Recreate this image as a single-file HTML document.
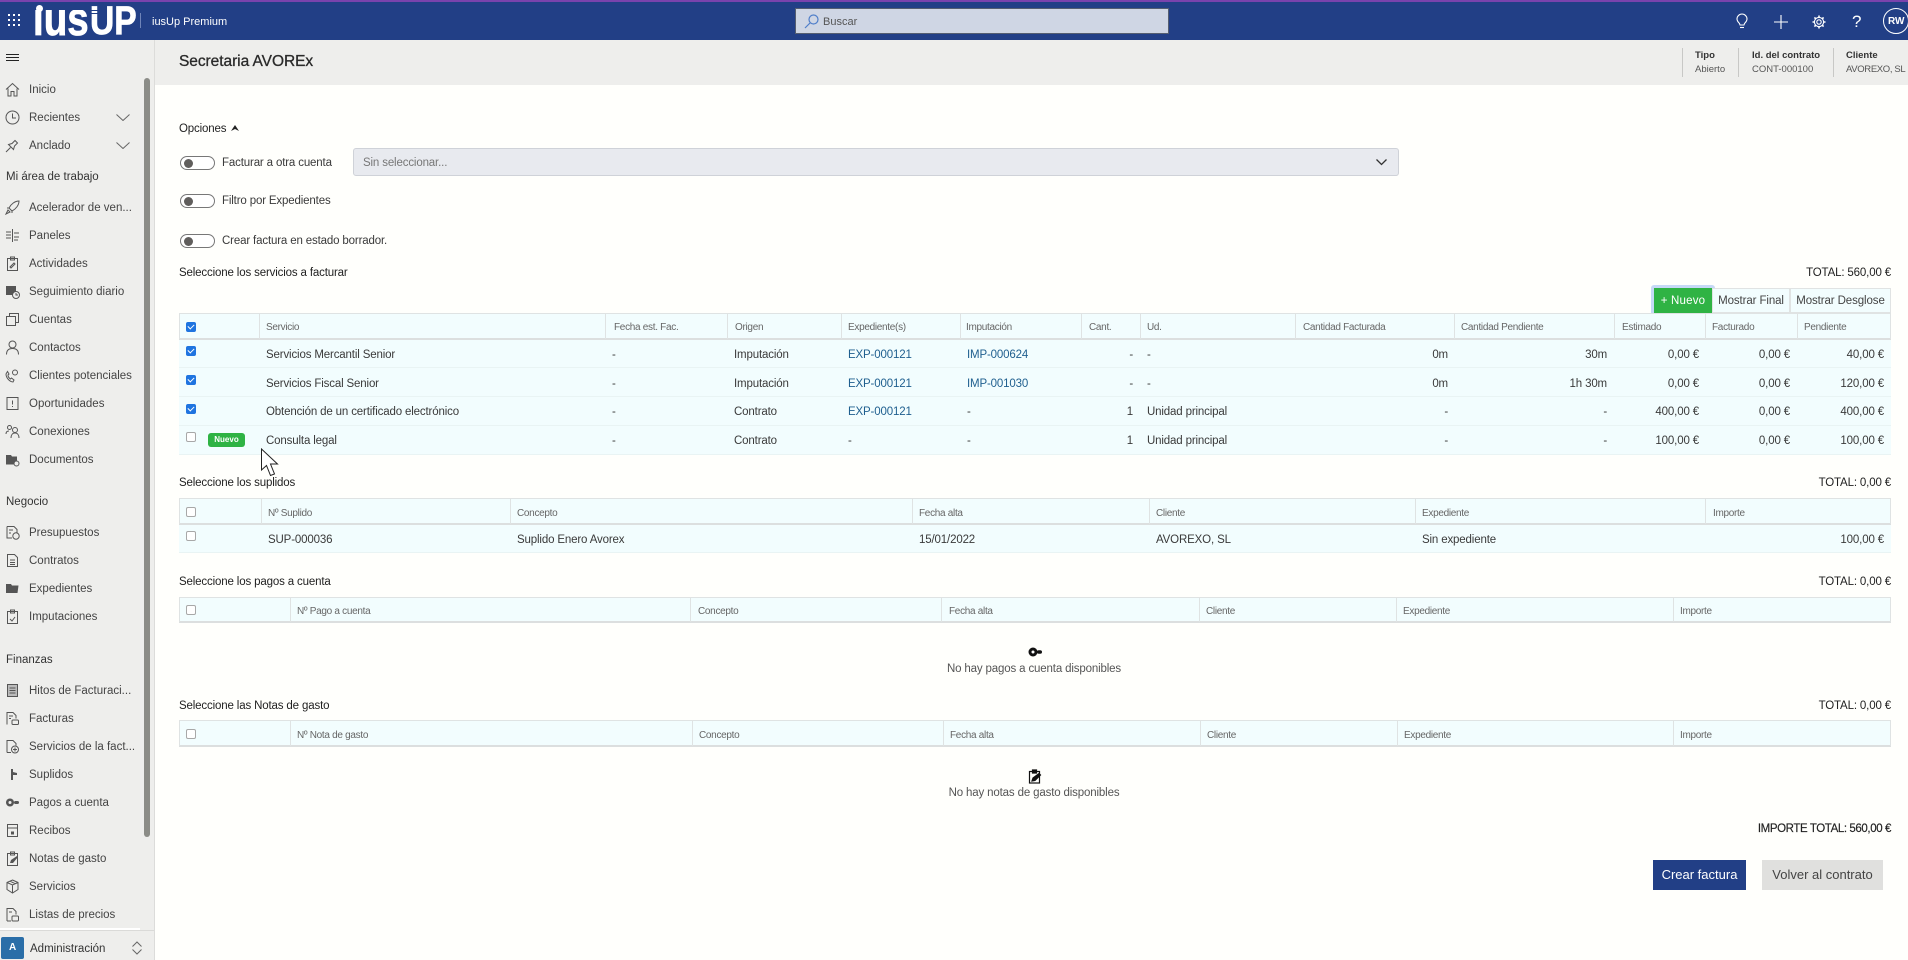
<!DOCTYPE html>
<html lang="es"><head><meta charset="utf-8"><title>Secretaria AVOREx</title>
<style>
html,body{margin:0;padding:0;width:1908px;height:960px;overflow:hidden;background:#fffffc}
body{position:relative;font-family:"Liberation Sans",Arial,sans-serif;font-size:12px;color:#333;-webkit-font-smoothing:antialiased}
.a{position:absolute}
.t{position:absolute;white-space:nowrap;line-height:14px;height:14px}
.n{font-size:11.5px;color:#444;left:29px;margin-top:1px}
.g{font-size:11.5px;color:#333;left:6px;margin-top:1px}
.h{font-size:10px;color:#666;letter-spacing:-.3px;margin-top:2px}
.c{font-size:11.5px;color:#3a3a3a;letter-spacing:-.15px;margin-top:1px}
.r{text-align:right}
.b{font-size:11.5px;color:#222;letter-spacing:-.15px;margin-top:1px}
.l{color:#1f5f8f}
.m{font-size:9.5px;margin-top:1px}
.hb{position:absolute;background:#f2fdfe;border-top:1px solid #dfe3e3;border-bottom:2px solid #dcdfdf;box-sizing:border-box}
.vl{position:absolute;width:1px;background:#dfe3e3}
.hl{position:absolute;height:1px;background:#e9f4f4}
.cb{position:absolute;width:10px;height:10px;border:1px solid #a8a8a8;border-radius:2px;background:#fff;box-sizing:border-box}
.ck{position:absolute;width:10px;height:10px;border-radius:2px;background:#1f74e0}
.ck:after{content:"";position:absolute;left:2px;top:1.5px;width:5px;height:3px;border-left:1.5px solid #fff;border-bottom:1.5px solid #fff;transform:rotate(-45deg)}
.tg{position:absolute;left:180px;width:33px;height:12px;border:1px solid #777;border-radius:8px;background:#fff;box-sizing:content-box}
.tg:after{content:"";position:absolute;left:3px;top:1.5px;width:9px;height:9px;border-radius:50%;background:#605e5c}
.ic{position:absolute;left:5px;width:15px;height:15px;fill:none;stroke:#555;stroke-width:1}
.s{fill:#555;stroke:none}
.btn{position:absolute;box-sizing:border-box;text-align:center;font-size:11.5px;letter-spacing:-.1px;line-height:24px;height:25px;top:288px;background:#f2fdfe;border:1px solid #e0e3e3;color:#444}
.lg{position:absolute;white-space:nowrap;font-weight:700;color:#fff;transform-origin:left top;-webkit-text-stroke:.8px #fff}
</style></head><body>

<!-- top bar -->
<div class="a" style="left:0;top:0;width:1908px;height:40px;background:#223f86"></div>
<div class="a" style="left:0;top:0;width:1908px;height:2px;background:#7a43ad"></div>
<svg class="a" style="left:8px;top:14px" width="12" height="12" fill="#fff"><rect x="0" y="0" width="2" height="2"/><rect x="5" y="0" width="2" height="2"/><rect x="10" y="0" width="2" height="2"/><rect x="0" y="5" width="2" height="2"/><rect x="5" y="5" width="2" height="2"/><rect x="10" y="5" width="2" height="2"/><rect x="0" y="10" width="2" height="2"/><rect x="5" y="10" width="2" height="2"/><rect x="10" y="10" width="2" height="2"/></svg>
<div class="lg" style="left:33px;top:-5px;height:47px;line-height:47px;font-size:47px;transform:scaleX(.82);clip-path:inset(15px -2px 0 -2px)">ius</div>
<div class="a" style="left:36px;top:5px;width:7px;height:7px;border-radius:50%;background:#fff"></div>
<div class="lg" style="left:90px;top:1px;height:40px;line-height:40px;font-size:40px;transform:scaleX(.84)">UP</div>
<div class="a" style="left:90px;top:10px;width:12px;height:1px;background:#223f86"></div>
<div class="a" style="left:90px;top:13px;width:12px;height:1px;background:#223f86"></div>
<div class="a" style="left:140px;top:13px;width:1px;height:15px;background:#6f84b8"></div>
<div class="t" style="left:152px;top:15px;font-size:11px;color:#fff">iusUp Premium</div>
<div class="a" style="left:795px;top:8px;width:374px;height:26px;box-sizing:border-box;background:#cfd6e4;border:1px solid #555e70"></div>
<svg class="a" style="left:804px;top:14px" width="15" height="15" fill="none" stroke="#4f7ec9" stroke-width="1.2"><circle cx="9.5" cy="5.5" r="4.5"/><path d="M6 9L1 14"/></svg>
<div class="t" style="left:823px;top:15px;font-size:11px;color:#555">Buscar</div>
<svg class="a" style="left:1735px;top:13px" width="14" height="16" fill="none" stroke="#fff" stroke-width="1.1"><path d="M4.500 10.500C3 9 2 7.800 2 6a5 5 0 0110 0c0 1.800-1 3-2.500 4.500L9 12H5z"/><path d="M5 14.500h4"/></svg>
<svg class="a" style="left:1774px;top:15px" width="14" height="14" stroke="#fff" stroke-width="1.1"><path d="M7 0v14M0 7h14"/></svg>
<svg class="a" style="left:1812px;top:15px" width="14" height="14" fill="none" stroke="#fff" stroke-width="1.1"><circle cx="7" cy="7" r="2.200"/><circle cx="7" cy="7" r="4.600"/><path stroke-width="1.600" d="M7 .5v2M7 11.500v2M.5 7h2M11.500 7h2M2.400 2.400l1.400 1.400M10.200 10.200l1.400 1.400M2.400 11.600l1.400-1.400M10.200 3.800l1.400-1.400"/></svg>
<div class="t" style="left:1852px;top:13px;height:18px;line-height:18px;font-size:17px;color:#fff">?</div>
<div class="a" style="left:1883px;top:8px;width:26px;height:26px;box-sizing:border-box;border:1px solid #fff;border-radius:50%"></div>
<div class="t" style="left:1888px;top:15px;font-size:10px;font-weight:700;color:#fff">RW</div>

<!-- sidebar -->
<div class="a" style="left:0;top:40px;width:154px;height:920px;background:#eeeeec;border-right:1px solid #dcdcda"></div>
<div class="a" style="left:144px;top:78px;width:6px;height:759px;border-radius:3px;background:#8b8c87"></div>
<svg class="a" style="left:6px;top:54px" width="13" height="7" stroke="#222"><path d="M0 .5h13M0 3.500h13M0 6.500h13"/></svg>

<svg class="ic" style="top:82px" viewBox="0 0 15 15"><path d="M1 7.500L7.500 1.500 14 7.500M3 6.500V14h3V9.500h3V14h3V6.500"/></svg>
<div class="t n" style="top:82px">Inicio</div>
<svg class="ic" style="top:110px" viewBox="0 0 15 15"><circle cx="7.500" cy="7.500" r="6.500"/><path d="M7.500 3.500v4.500H11"/></svg>
<div class="t n" style="top:110px">Recientes</div>
<svg class="a" style="left:116px;top:114px" width="14" height="7" fill="none" stroke="#666"><path d="M.5.500l6.500 6 6.500-6"/></svg>
<svg class="ic" style="top:138px" viewBox="0 0 15 15"><path d="M1 14l4.500-4.500M3.500 6.500l5 5 1-3.500 3-3-2.500-2.500-3 3z"/></svg>
<div class="t n" style="top:138px">Anclado</div>
<svg class="a" style="left:116px;top:142px" width="14" height="7" fill="none" stroke="#666"><path d="M.5.500l6.500 6 6.500-6"/></svg>
<div class="t g" style="top:169px">Mi área de trabajo</div>
<svg class="ic" style="top:200px" viewBox="0 0 15 15"><path d="M1 14l2-4 2 2zM4 8c2-4 6-7 10-7 0 4-3 8-7 10zM4 8L2 8M7 11v2"/></svg>
<div class="t n" style="top:200px">Acelerador de ven...</div>
<svg class="ic" style="top:228px" viewBox="0 0 15 15"><path d="M7.500 1v13M1 4h5M1 7h5M1 10h5M9 5h5M9 9h5M9 12h4"/></svg>
<div class="t n" style="top:228px">Paneles</div>
<svg class="ic" style="top:256px" viewBox="0 0 15 15"><rect x="2.500" y="2.500" width="10" height="12"/><path d="M5.500 1h4v3h-4zM5 11l4-4 1 1-4 4z"/></svg>
<div class="t n" style="top:256px">Actividades</div>
<svg class="ic" style="top:284px" viewBox="0 0 15 15"><rect class="s" x="1" y="2" width="10" height="9"/><circle cx="11" cy="11" r="3.500" fill="#eee"/><path d="M11 9v2h2"/></svg>
<div class="t n" style="top:284px">Seguimiento diario</div>
<svg class="ic" style="top:312px" viewBox="0 0 15 15"><rect x="1.500" y="4.500" width="9" height="9"/><path d="M4.500 4.500v-3h9v9h-3"/></svg>
<div class="t n" style="top:312px">Cuentas</div>
<svg class="ic" style="top:340px" viewBox="0 0 15 15"><circle cx="7.500" cy="4.500" r="3.500"/><path d="M1.500 14.500c0-4 2-6 6-6s6 2 6 6"/></svg>
<div class="t n" style="top:340px">Contactos</div>
<svg class="ic" style="top:368px" viewBox="0 0 15 15"><path d="M1 6c0 4 4 8 7 8l1-2-2.500-2-1 1C4 10 3 8.500 3 7l1-1-1.500-2.500z"/><circle cx="10" cy="4.500" r="2.500"/></svg>
<div class="t n" style="top:368px">Clientes potenciales</div>
<svg class="ic" style="top:396px" viewBox="0 0 15 15"><rect x="2" y="1.500" width="11" height="12"/><path d="M7.500 4.500v4M7.500 10v1"/></svg>
<div class="t n" style="top:396px">Oportunidades</div>
<svg class="ic" style="top:424px" viewBox="0 0 15 15"><circle cx="4.500" cy="3.500" r="2"/><circle cx="10" cy="6" r="2.500"/><path d="M1 10c0-2 1-3 3-3M6 14c0-3 1.500-5 4-5s4 2 4 5"/></svg>
<div class="t n" style="top:424px">Conexiones</div>
<svg class="ic" style="top:452px" viewBox="0 0 15 15"><path class="s" d="M1 3h5l1 1.500h5v4l-2 1-1 3H1z"/><circle cx="11.500" cy="11.500" r="2.500"/></svg>
<div class="t n" style="top:452px">Documentos</div>
<div class="t g" style="top:494px">Negocio</div>
<svg class="ic" style="top:525px" viewBox="0 0 15 15"><path d="M2 1.500h7l3 3V8M2 1.500V13h5"/><path d="M4 5h4M4 8h2"/><circle cx="11" cy="11" r="3.200"/></svg>
<div class="t n" style="top:525px">Presupuestos</div>
<svg class="ic" style="top:553px" viewBox="0 0 15 15"><path d="M2.500 1.500h7l3 3v9h-10zM5 7h5M5 9.500h5M5 11.500h5"/></svg>
<div class="t n" style="top:553px">Contratos</div>
<svg class="ic" style="top:581px" viewBox="0 0 15 15"><path class="s" d="M1 3h5l1 1.500h6.500L12.500 12H1z"/></svg>
<div class="t n" style="top:581px">Expedientes</div>
<svg class="ic" style="top:609px" viewBox="0 0 15 15"><rect x="2.500" y="2.500" width="10" height="12"/><path d="M5.500 1h4v3h-4zM5 10l2 2 3-4"/></svg>
<div class="t n" style="top:609px">Imputaciones</div>
<div class="t g" style="top:652px">Finanzas</div>
<svg class="ic" style="top:683px" viewBox="0 0 15 15"><rect x="2.500" y="1.500" width="10" height="12" fill="#bbb"/><path d="M4.500 5h6M4.500 7.500h6M4.500 10h6"/></svg>
<div class="t n" style="top:683px">Hitos de Facturaci...</div>
<svg class="ic" style="top:711px" viewBox="0 0 15 15"><path d="M2 13.500v-12h6l3 3v3M4 5h4M4 7.500h2"/><rect x="7" y="9" width="6.500" height="4.500" rx="1"/></svg>
<div class="t n" style="top:711px">Facturas</div>
<svg class="ic" style="top:739px" viewBox="0 0 15 15"><path d="M2 13.500v-12h6l3 3v2M2 13.500h4"/><circle cx="10" cy="10.500" r="3.500"/><path d="M10 8.500v4M8 10.500h4"/></svg>
<div class="t n" style="top:739px">Servicios de la fact...</div>
<svg class="ic" style="top:767px" viewBox="0 0 15 15"><path class="s" d="M6 2h2v3l4 1v2l-4 0v5H6z"/></svg>
<div class="t n" style="top:767px">Suplidos</div>
<svg class="ic" style="top:795px" viewBox="0 0 15 15"><circle class="s" cx="5" cy="7.500" r="4"/><circle cx="5" cy="7.500" r="1.500" fill="#eee" stroke="none"/><rect class="s" x="9" y="6" width="5" height="3" rx="1.500"/></svg>
<div class="t n" style="top:795px">Pagos a cuenta</div>
<svg class="ic" style="top:823px" viewBox="0 0 15 15"><path d="M2.500 1.500h10v12h-10zM2.500 5h10"/><rect class="s" x="6" y="8.500" width="3" height="3"/></svg>
<div class="t n" style="top:823px">Recibos</div>
<svg class="ic" style="top:851px" viewBox="0 0 15 15"><rect x="2.500" y="2.500" width="10" height="12"/><path d="M5.500 1h4v3h-4z"/><path class="s" d="M5 12l1-3 6-4 1 1-5 6z"/></svg>
<div class="t n" style="top:851px">Notas de gasto</div>
<svg class="ic" style="top:879px" viewBox="0 0 15 15"><path d="M7.500 1l5.500 2.500v7L7.500 14 2 10.500v-7zM2 3.500L7.500 6 13 3.500M7.500 6v8M5 2.200l5.500 2.600"/></svg>
<div class="t n" style="top:879px">Servicios</div>
<svg class="ic" style="top:907px" viewBox="0 0 15 15"><path d="M2 14V1.500h6l3 3v3M4 5h3M2 14h4"/><rect x="7" y="9" width="6.500" height="5" rx="1"/></svg>
<div class="t n" style="top:907px">Listas de precios</div>
<div class="a" style="left:0;top:928px;width:140px;height:2px;background:#fff"></div>
<div class="a" style="left:0;top:930px;width:154px;height:1px;background:#dadad8"></div>
<div class="a" style="left:1px;top:937px;width:23px;height:22px;background:#2a6ea8;border-radius:2px"></div>
<div class="t" style="left:9px;top:941px;font-size:10px;font-weight:700;color:#fff">A</div>
<div class="t n" style="top:941px;left:30px;color:#333;font-size:11.5px">Administración</div>
<svg class="a" style="left:132px;top:941px" width="10" height="14" fill="none" stroke="#666"><path d="M.5 5.500L5 1l4.500 4.500M.5 8.500L5 13l4.500-4.500"/></svg>

<!-- sub header -->
<div class="a" style="left:155px;top:40px;width:1753px;height:45px;background:#eeeeec"></div>
<div class="t" style="left:179px;top:53px;height:18px;line-height:18px;font-size:15.500px;color:#2a2a2a;-webkit-text-stroke:.3px #2a2a2a;letter-spacing:-.05px">Secretaria AVOREx</div>
<div class="a" style="left:1682px;top:48px;width:1px;height:29px;background:#c8c8c6"></div>
<div class="a" style="left:1738px;top:48px;width:1px;height:29px;background:#c8c8c6"></div>
<div class="a" style="left:1833px;top:48px;width:1px;height:29px;background:#c8c8c6"></div>
<div class="t m" style="left:1695px;top:48px;font-weight:700;color:#333">Tipo</div>
<div class="t m" style="left:1695px;top:62px;color:#555">Abierto</div>
<div class="t m" style="left:1752px;top:48px;font-weight:700;color:#333">Id. del contrato</div>
<div class="t m" style="left:1752px;top:62px;color:#555">CONT-000100</div>
<div class="t m" style="left:1846px;top:48px;font-weight:700;color:#333">Cliente</div>
<div class="t m" style="left:1846px;top:62px;color:#555;letter-spacing:-.35px">AVOREXO, SL</div>

<!-- options -->
<div class="t b" style="left:179px;top:121px">Opciones</div>
<svg class="a" style="left:231px;top:125px" width="8" height="7" fill="#222"><path d="M4 0l4 6-4-2-4 2z"/></svg>
<div class="tg" style="top:156px"></div>
<div class="t c" style="left:222px;top:155px">Facturar a otra cuenta</div>
<div class="a" style="left:353px;top:148px;width:1046px;height:28px;box-sizing:border-box;background:#e8eaef;border:1px solid #cfd2d8;border-radius:3px"></div>
<div class="t c" style="left:363px;top:155px;color:#777">Sin seleccionar...</div>
<svg class="a" style="left:1376px;top:159px" width="11" height="7" fill="none" stroke="#333" stroke-width="1.300"><path d="M.5.500L5.500 5.500 10.500.5"/></svg>
<div class="tg" style="top:194px"></div>
<div class="t c" style="left:222px;top:193px">Filtro por Expedientes</div>
<div class="tg" style="top:234px"></div>
<div class="t c" style="left:222px;top:233px">Crear factura en estado borrador.</div>

<!-- table 1 -->
<div class="t b" style="left:179px;top:265px">Seleccione los servicios a facturar</div>
<div class="t b r" style="right:17px;top:265px">TOTAL: 560,00 €</div>
<div class="a" style="left:1651px;top:285px;width:64px;height:31px;background:#c6d9f6;border-radius:3px"></div>
<div class="btn" style="left:1654px;width:58px;background:#2fb344;border-color:#2fb344;color:#fff;letter-spacing:.2px">+ Nuevo</div>
<div class="btn" style="left:1712px;width:78px">Mostrar Final</div>
<div class="btn" style="left:1790px;width:101px">Mostrar Desglose</div>

<div class="a" style="left:179px;top:339px;width:1712px;height:116px;background:#f2fdfe"></div>
<div class="hb" style="left:179px;top:313px;width:1712px;height:27px"></div>
<div class="vl" style="left:259px;top:314px;height:25px"></div><div class="vl" style="left:605px;top:314px;height:25px"></div><div class="vl" style="left:727px;top:314px;height:25px"></div><div class="vl" style="left:841px;top:314px;height:25px"></div><div class="vl" style="left:960px;top:314px;height:25px"></div><div class="vl" style="left:1081px;top:314px;height:25px"></div><div class="vl" style="left:1140px;top:314px;height:25px"></div><div class="vl" style="left:1295px;top:314px;height:25px"></div><div class="vl" style="left:1454px;top:314px;height:25px"></div><div class="vl" style="left:1614px;top:314px;height:25px"></div><div class="vl" style="left:1705px;top:314px;height:25px"></div><div class="vl" style="left:1797px;top:314px;height:25px"></div><div class="vl" style="left:1890px;top:314px;height:25px"></div><div class="vl" style="left:179px;top:314px;height:25px"></div>
<div class="hl" style="left:179px;top:367px;width:1712px"></div><div class="hl" style="left:179px;top:396px;width:1712px"></div><div class="hl" style="left:179px;top:425px;width:1712px"></div><div class="hl" style="left:179px;top:454px;width:1712px"></div>
<div class="ck" style="left:186px;top:322px"></div>
<div class="t h" style="left:266px;top:319px">Servicio</div><div class="t h" style="left:614px;top:319px">Fecha est. Fac.</div><div class="t h" style="left:735px;top:319px">Origen</div><div class="t h" style="left:848px;top:319px">Expediente(s)</div><div class="t h" style="left:966px;top:319px">Imputación</div><div class="t h" style="left:1089px;top:319px">Cant.</div><div class="t h" style="left:1147px;top:319px">Ud.</div><div class="t h" style="left:1303px;top:319px">Cantidad Facturada</div><div class="t h" style="left:1461px;top:319px">Cantidad Pendiente</div><div class="t h" style="left:1622px;top:319px">Estimado</div><div class="t h" style="left:1712px;top:319px">Facturado</div><div class="t h" style="left:1804px;top:319px">Pendiente</div>

<div class="ck" style="left:186px;top:346px"></div>
<div class="t c" style="left:266px;top:347px">Servicios Mercantil Senior</div><div class="t c" style="left:612px;top:347px">-</div><div class="t c" style="left:734px;top:347px">Imputación</div><div class="t c l" style="left:848px;top:347px">EXP-000121</div><div class="t c l" style="left:967px;top:347px">IMP-000624</div><div class="t c r" style="right:775px;top:347px">-</div><div class="t c" style="left:1147px;top:347px">-</div><div class="t c r" style="right:460px;top:347px">0m</div><div class="t c r" style="right:301px;top:347px">30m</div><div class="t c r" style="right:209px;top:347px">0,00 €</div><div class="t c r" style="right:118px;top:347px">0,00 €</div><div class="t c r" style="right:24px;top:347px">40,00 €</div>

<div class="ck" style="left:186px;top:375px"></div>
<div class="t c" style="left:266px;top:376px">Servicios Fiscal Senior</div><div class="t c" style="left:612px;top:376px">-</div><div class="t c" style="left:734px;top:376px">Imputación</div><div class="t c l" style="left:848px;top:376px">EXP-000121</div><div class="t c l" style="left:967px;top:376px">IMP-001030</div><div class="t c r" style="right:775px;top:376px">-</div><div class="t c" style="left:1147px;top:376px">-</div><div class="t c r" style="right:460px;top:376px">0m</div><div class="t c r" style="right:301px;top:376px">1h 30m</div><div class="t c r" style="right:209px;top:376px">0,00 €</div><div class="t c r" style="right:118px;top:376px">0,00 €</div><div class="t c r" style="right:24px;top:376px">120,00 €</div>

<div class="ck" style="left:186px;top:404px"></div>
<div class="t c" style="left:266px;top:404px">Obtención de un certificado electrónico</div><div class="t c" style="left:612px;top:404px">-</div><div class="t c" style="left:734px;top:404px">Contrato</div><div class="t c l" style="left:848px;top:404px">EXP-000121</div><div class="t c" style="left:967px;top:404px">-</div><div class="t c r" style="right:775px;top:404px">1</div><div class="t c" style="left:1147px;top:404px">Unidad principal</div><div class="t c r" style="right:460px;top:404px">-</div><div class="t c r" style="right:301px;top:404px">-</div><div class="t c r" style="right:209px;top:404px">400,00 €</div><div class="t c r" style="right:118px;top:404px">0,00 €</div><div class="t c r" style="right:24px;top:404px">400,00 €</div>

<div class="cb" style="left:186px;top:432px"></div>
<div class="a" style="left:208px;top:433px;width:37px;height:14px;background:#2fb344;border-radius:3px;text-align:center;color:#fff;font-size:8px;font-weight:700;line-height:14px">Nuevo</div>
<div class="t c" style="left:266px;top:433px">Consulta legal</div><div class="t c" style="left:612px;top:433px">-</div><div class="t c" style="left:734px;top:433px">Contrato</div><div class="t c" style="left:848px;top:433px">-</div><div class="t c" style="left:967px;top:433px">-</div><div class="t c r" style="right:775px;top:433px">1</div><div class="t c" style="left:1147px;top:433px">Unidad principal</div><div class="t c r" style="right:460px;top:433px">-</div><div class="t c r" style="right:301px;top:433px">-</div><div class="t c r" style="right:209px;top:433px">100,00 €</div><div class="t c r" style="right:118px;top:433px">0,00 €</div><div class="t c r" style="right:24px;top:433px">100,00 €</div>

<!-- table 2 -->
<div class="t b" style="left:179px;top:475px">Seleccione los suplidos</div>
<div class="t b r" style="right:17px;top:475px">TOTAL: 0,00 €</div>
<div class="a" style="left:179px;top:524px;width:1712px;height:29px;background:#f2fdfe;border-bottom:1px solid #e9f4f4;box-sizing:border-box"></div>
<div class="hb" style="left:179px;top:498px;width:1712px;height:27px"></div>
<div class="vl" style="left:179px;top:499px;height:25px"></div><div class="vl" style="left:261px;top:499px;height:25px"></div><div class="vl" style="left:510px;top:499px;height:25px"></div><div class="vl" style="left:912px;top:499px;height:25px"></div><div class="vl" style="left:1149px;top:499px;height:25px"></div><div class="vl" style="left:1415px;top:499px;height:25px"></div><div class="vl" style="left:1705px;top:499px;height:25px"></div><div class="vl" style="left:1890px;top:499px;height:25px"></div>
<div class="cb" style="left:186px;top:507px"></div>
<div class="t h" style="left:268px;top:505px">Nº Suplido</div><div class="t h" style="left:517px;top:505px">Concepto</div><div class="t h" style="left:919px;top:505px">Fecha alta</div><div class="t h" style="left:1156px;top:505px">Cliente</div><div class="t h" style="left:1422px;top:505px">Expediente</div><div class="t h" style="left:1713px;top:505px">Importe</div>
<div class="cb" style="left:186px;top:531px"></div>
<div class="t c" style="left:268px;top:532px">SUP-000036</div><div class="t c" style="left:517px;top:532px">Suplido Enero Avorex</div><div class="t c" style="left:919px;top:532px">15/01/2022</div><div class="t c" style="left:1156px;top:532px">AVOREXO, SL</div><div class="t c" style="left:1422px;top:532px">Sin expediente</div><div class="t c r" style="right:24px;top:532px">100,00 €</div>

<!-- table 3 -->
<div class="t b" style="left:179px;top:574px">Seleccione los pagos a cuenta</div>
<div class="t b r" style="right:17px;top:574px">TOTAL: 0,00 €</div>
<div class="hb" style="left:179px;top:597px;width:1712px;height:26px"></div>
<div class="vl" style="left:179px;top:598px;height:24px"></div><div class="vl" style="left:290px;top:598px;height:24px"></div><div class="vl" style="left:690px;top:598px;height:24px"></div><div class="vl" style="left:941px;top:598px;height:24px"></div><div class="vl" style="left:1199px;top:598px;height:24px"></div><div class="vl" style="left:1396px;top:598px;height:24px"></div><div class="vl" style="left:1673px;top:598px;height:24px"></div><div class="vl" style="left:1890px;top:598px;height:24px"></div>
<div class="cb" style="left:186px;top:605px"></div>
<div class="t h" style="left:297px;top:603px">Nº Pago a cuenta</div><div class="t h" style="left:698px;top:603px">Concepto</div><div class="t h" style="left:949px;top:603px">Fecha alta</div><div class="t h" style="left:1206px;top:603px">Cliente</div><div class="t h" style="left:1403px;top:603px">Expediente</div><div class="t h" style="left:1680px;top:603px">Importe</div>
<svg class="a" style="left:1028px;top:647px" width="14" height="10"><circle cx="5" cy="5" r="4.500" fill="#111"/><circle cx="5" cy="5" r="1.500" fill="#fff"/><rect x="9" y="3.200" width="5" height="3.600" rx="1.800" fill="#111"/></svg>
<div class="t c" style="left:834px;width:400px;text-align:center;top:661px;color:#555">No hay pagos a cuenta disponibles</div>

<!-- table 4 -->
<div class="t b" style="left:179px;top:698px">Seleccione las Notas de gasto</div>
<div class="t b r" style="right:17px;top:698px">TOTAL: 0,00 €</div>
<div class="hb" style="left:179px;top:720px;width:1712px;height:27px"></div>
<div class="vl" style="left:179px;top:721px;height:25px"></div><div class="vl" style="left:290px;top:721px;height:25px"></div><div class="vl" style="left:692px;top:721px;height:25px"></div><div class="vl" style="left:943px;top:721px;height:25px"></div><div class="vl" style="left:1200px;top:721px;height:25px"></div><div class="vl" style="left:1397px;top:721px;height:25px"></div><div class="vl" style="left:1673px;top:721px;height:25px"></div><div class="vl" style="left:1890px;top:721px;height:25px"></div>
<div class="cb" style="left:186px;top:729px"></div>
<div class="t h" style="left:297px;top:727px">Nº Nota de gasto</div><div class="t h" style="left:699px;top:727px">Concepto</div><div class="t h" style="left:950px;top:727px">Fecha alta</div><div class="t h" style="left:1207px;top:727px">Cliente</div><div class="t h" style="left:1404px;top:727px">Expediente</div><div class="t h" style="left:1680px;top:727px">Importe</div>
<svg class="a" style="left:1028px;top:769px" width="14" height="15" fill="none" stroke="#111" stroke-width="1.200"><rect x="1.500" y="2.500" width="10" height="11.500"/><path d="M4.500 1h4v3h-4z" fill="#111"/><path d="M4 12l1-3 6-4.500 1.500 1.500-5.500 5.500z" fill="#111"/></svg>
<div class="t c" style="left:834px;width:400px;text-align:center;top:785px;color:#555">No hay notas de gasto disponibles</div>

<div class="t b r" style="right:17px;top:821px;letter-spacing:-.4px;-webkit-text-stroke:.15px #222">IMPORTE TOTAL: 560,00 €</div>
<div class="a" style="left:1653px;top:860px;width:93px;height:30px;background:#223f86;color:#fff;text-align:center;line-height:30px;font-size:13px">Crear factura</div>
<div class="a" style="left:1762px;top:860px;width:121px;height:30px;background:#e0e0de;color:#444;text-align:center;line-height:30px;font-size:13px">Volver al contrato</div>

<!-- cursor -->
<svg class="a" style="left:260px;top:448px" width="20" height="29" viewBox="0 0 20 29"><path d="M1.500 1v21l5-4.500 4 10 4-1.500-4-10h7z" fill="#fff" stroke="#222" stroke-width="1"/></svg>
</body></html>
